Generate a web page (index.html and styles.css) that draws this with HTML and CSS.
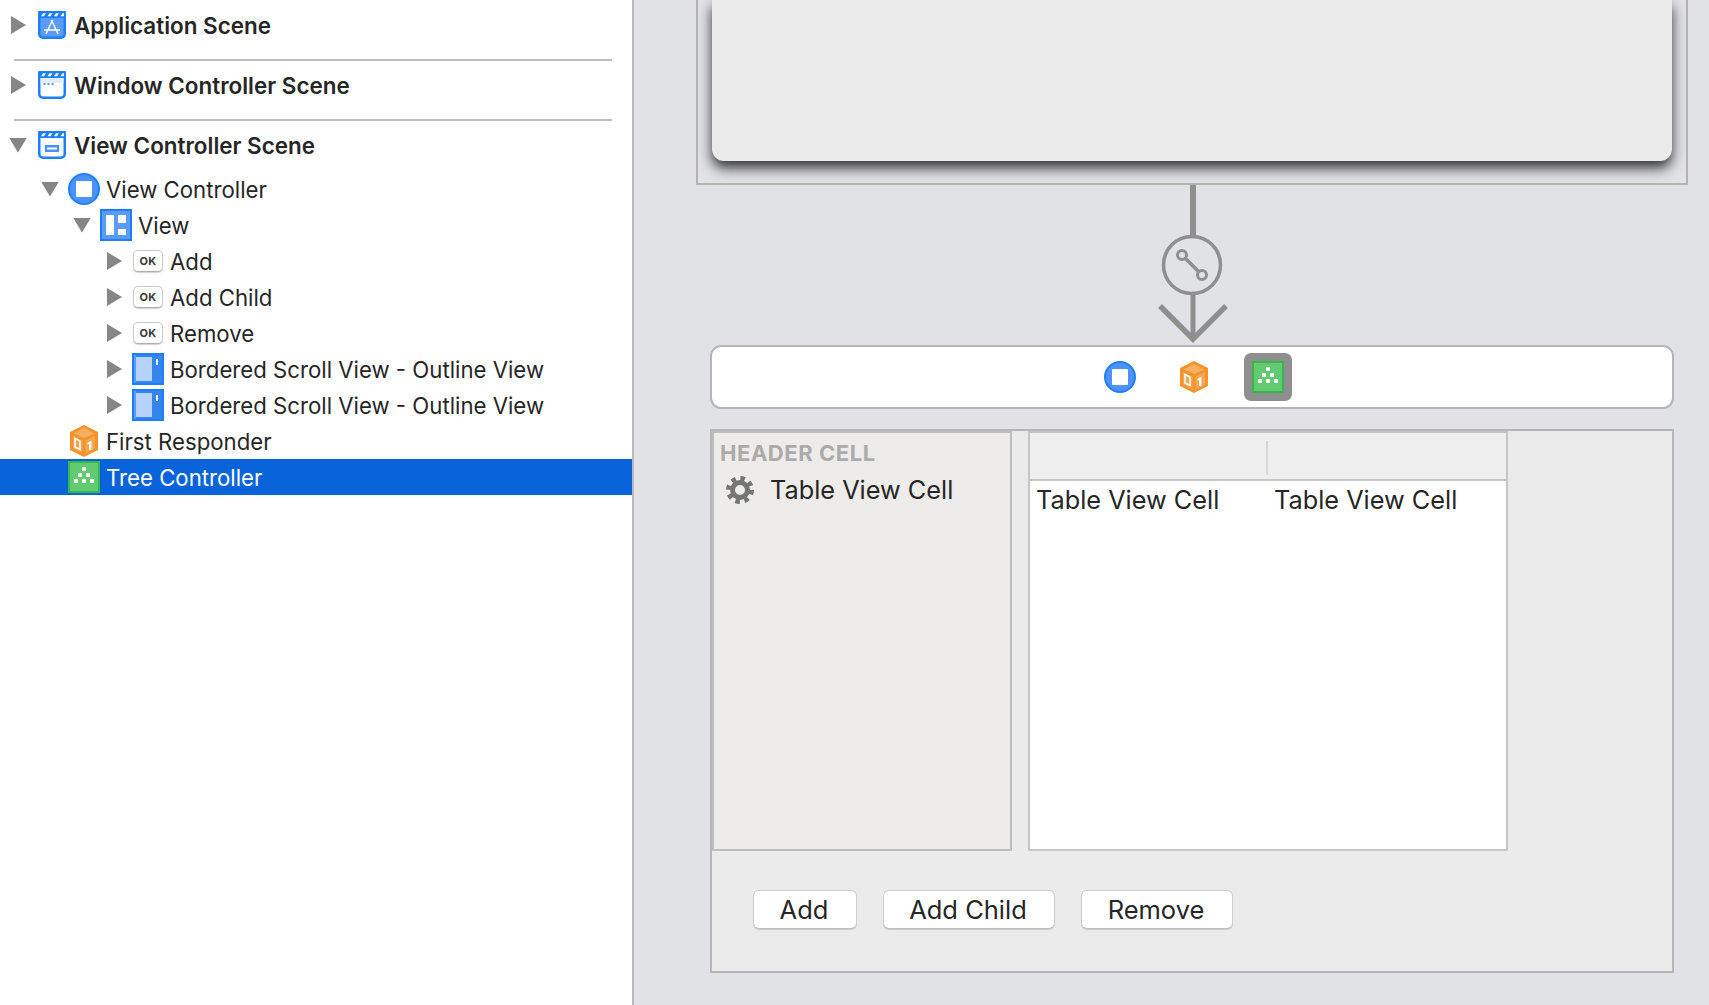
FILE: index.html
```html
<!DOCTYPE html>
<html lang="en">
<head>
<meta charset="utf-8">
<title>Storyboard</title>
<link rel="stylesheet" href="styles.css">
</head>
<body>
<svg class="defs" width="0" height="0" aria-hidden="true">
  <symbol id="clap" viewBox="0 0 28 28">
    <path d="M1 0h26a1 1 0 0 1 1 1v22a5 5 0 0 1-5 5H5a5 5 0 0 1-5-5V1a1 1 0 0 1 1-1z" fill="#1f7ffb"/>
    <path d="M3 5.300l2-3h3l-2 3zM9.500 5.300l2-3h3l-2 3zM16 5.300l2-3h3l-2 3zM22.500 5.300l2-3h1.500v3z" fill="#fff"/>
  </symbol>
  <symbol id="i-app" viewBox="0 0 28 28">
    <use href="#clap"/>
    <path d="M2.500 7h23v15.500a3 3 0 0 1-3 3h-17a3 3 0 0 1-3-3z" fill="#5a9bf8"/>
    <path d="M14.500 9L8 23M13.500 9L20 23M6 19h16" fill="none" stroke="#fff" stroke-width="1.400"/>
  </symbol>
  <symbol id="i-win" viewBox="0 0 28 28">
    <use href="#clap"/>
    <path d="M2.500 7h23v15.500a3 3 0 0 1-3 3h-17a3 3 0 0 1-3-3z" fill="#fff"/>
    <path d="M2.500 7h23v5h-23z" fill="#e3eefd"/>
    <path d="M5.500 12h2v2h-2zM9.500 12h2v2h-2zM13.500 12h2v2h-2z" fill="#5a9bf8"/>
  </symbol>
  <symbol id="i-view" viewBox="0 0 28 28">
    <use href="#clap"/>
    <path d="M2.500 7h23v15.500a3 3 0 0 1-3 3h-17a3 3 0 0 1-3-3z" fill="#fff"/>
    <path d="M7 14h14v7H7z" fill="#4a90f9"/>
    <path d="M9 16.500h10v2H9z" fill="#fff"/>
  </symbol>
  <symbol id="i-vc" viewBox="0 0 32 32">
    <circle cx="16" cy="16" r="15" fill="#4c92fa" stroke="#1f7ffb" stroke-width="2"/>
    <rect x="8" y="8" width="16" height="16" rx="1" fill="#fff"/>
  </symbol>
  <symbol id="i-layout" viewBox="0 0 32 32">
    <rect x="1" y="1" width="30" height="30" fill="#5a9bf8" stroke="#1f7ffb" stroke-width="2"/>
    <path d="M6 6h8v20H6zM18 6h8v8h-8zM18 20h8v6h-8z" fill="#fff"/>
  </symbol>
  <symbol id="i-scroll" viewBox="0 0 32 32">
    <rect x="1" y="1" width="30" height="30" fill="#3485ee" stroke="#1f7ffb" stroke-width="2"/>
    <path d="M2 2h2v28H2z" fill="#5a9bf8"/>
    <path d="M4 4h16v24H4z" fill="#b7d3fb"/>
    <path d="M24 6h2v6h-2z" fill="#fff"/>
  </symbol>
  <symbol id="i-cube" viewBox="0 0 28 32">
    <path d="M14 0l14 7v18l-14 7-14-7V7z" fill="#f5932b"/>
    <path d="M14 3l10.500 5.500L14 13 3.500 8.500z" fill="#f6ae62"/>
    <path d="M15.500 15.500l9.500-4.500v12.500l-9.500 5z" fill="#f7a54f"/>
    <path d="M12.500 15.500L3 11v12.500l9.500 5z" fill="#f7a54f"/>
    <path d="M5 13.500l5 2.500v8.500l-5-2.500z" fill="none" stroke="#fff" stroke-width="1.600"/>
    <path d="M19 17l2.500-1.500V25h-2.500v-6l-1.500.6v-1.700z" fill="#fff"/>
  </symbol>
  <symbol id="i-tree" viewBox="0 0 32 32">
    <rect x="1" y="1" width="30" height="30" fill="#62cb72" stroke="#37b64d" stroke-width="2"/>
    <path d="M14 6h4v4h-4zM10 12h4v4h-4zM18 12h4v4h-4zM6 18h4v4H6zM14 18h4v4h-4zM22 18h4v4h-4z" fill="#fff"/>
  </symbol>
</svg>

<div class="app">
  <aside class="outline">
    <div class="row scene first">
      <span class="tri-r"></span>
      <svg class="ic-scene"><use href="#i-app"/></svg>
      <span class="label strong">Application Scene</span>
    </div>
    <div class="sep"></div>
    <div class="row scene">
      <span class="tri-r"></span>
      <svg class="ic-scene"><use href="#i-win"/></svg>
      <span class="label strong">Window Controller Scene</span>
    </div>
    <div class="sep"></div>
    <div class="row scene last">
      <span class="tri-d"></span>
      <svg class="ic-scene"><use href="#i-view"/></svg>
      <span class="label strong">View Controller Scene</span>
    </div>
    <div class="row l1">
      <span class="tri-d"></span>
      <svg class="ic"><use href="#i-vc"/></svg>
      <span class="label">View Controller</span>
    </div>
    <div class="row l2">
      <span class="tri-d"></span>
      <svg class="ic"><use href="#i-layout"/></svg>
      <span class="label">View</span>
    </div>
    <div class="row l3">
      <span class="tri-r"></span>
      <span class="ok">OK</span>
      <span class="label">Add</span>
    </div>
    <div class="row l3">
      <span class="tri-r"></span>
      <span class="ok">OK</span>
      <span class="label">Add Child</span>
    </div>
    <div class="row l3">
      <span class="tri-r"></span>
      <span class="ok">OK</span>
      <span class="label">Remove</span>
    </div>
    <div class="row l3">
      <span class="tri-r"></span>
      <svg class="ic"><use href="#i-scroll"/></svg>
      <span class="label">Bordered Scroll View - Outline View</span>
    </div>
    <div class="row l3">
      <span class="tri-r"></span>
      <svg class="ic"><use href="#i-scroll"/></svg>
      <span class="label">Bordered Scroll View - Outline View</span>
    </div>
    <div class="row l1">
      <span class="tri-none"></span>
      <svg class="ic-cube"><use href="#i-cube"/></svg>
      <span class="label">First Responder</span>
    </div>
    <div class="row l1 selected">
      <span class="tri-none"></span>
      <svg class="ic"><use href="#i-tree"/></svg>
      <span class="label">Tree Controller</span>
    </div>
  </aside>

  <main class="canvas">
    <div class="column">
      <div class="frame">
        <div class="window"></div>
      </div>

      <svg class="segue" viewBox="0 0 80 160" width="80" height="160">
        <path d="M37 0v52" stroke="#8f8f8f" stroke-width="6" fill="none"/>
        <circle cx="36" cy="80" r="28.500" fill="none" stroke="#8f8f8f" stroke-width="3.500"/>
        <path d="M37 110v44" stroke="#8f8f8f" stroke-width="5" fill="none"/>
        <path d="M4 121l33 33 33-33" stroke="#8f8f8f" stroke-width="5.500" fill="none"/>
        <path d="M29 73l14 14" stroke="#8f8f8f" stroke-width="3.500" fill="none"/>
        <circle cx="26" cy="70" r="4.500" fill="#e1e2e6" stroke="#8f8f8f" stroke-width="3"/>
        <circle cx="46" cy="90" r="4.500" fill="#e1e2e6" stroke="#8f8f8f" stroke-width="3"/>
      </svg>

      <div class="dock">
        <svg class="ic dock-vc"><use href="#i-vc"/></svg>
        <svg class="ic-cube dock-cube"><use href="#i-cube"/></svg>
        <span class="dock-selected"><svg class="ic"><use href="#i-tree"/></svg></span>
      </div>

      <section class="view">
        <div class="panes">
          <div class="source">
            <div class="source-header">HEADER CELL</div>
            <div class="source-row">
              <svg class="gear" viewBox="0 0 28 28" width="28" height="28">
                <circle cx="14" cy="14" r="11.500" fill="none" stroke="#757575" stroke-width="5" stroke-dasharray="4.500 4.530"/>
                <circle cx="14" cy="14" r="7.500" fill="none" stroke="#757575" stroke-width="5"/>
              </svg>
              <span class="cell">Table View Cell</span>
            </div>
          </div>
          <div class="table">
            <div class="table-head">
              <span class="head-divider"></span>
            </div>
            <div class="table-body">
              <span class="cell col-a">Table View Cell</span>
              <span class="cell">Table View Cell</span>
            </div>
          </div>
        </div>
        <div class="buttons">
          <button class="btn btn-add">Add</button>
          <button class="btn btn-child">Add Child</button>
          <button class="btn btn-remove">Remove</button>
        </div>
      </section>
    </div>
  </main>
</div>
</body>
</html>
```

FILE: styles.css
```css
* { box-sizing: border-box; }
html, body { margin: 0; height: 100%; overflow: hidden; }
body { font-family: Inter, "Liberation Sans", sans-serif; color: #262626; background: #fff; }
.defs { position: absolute; }

.app { display: flex; height: 1005px; }

/* outline */
.outline { width: 634px; flex: none; background: #fff; border-right: 2px solid #bababa; }
.row { display: flex; align-items: center; height: 36px; }
.label { font-size: 22.200px; line-height: 36px; padding-top: 1px; white-space: nowrap; }
.label.strong { font-weight: 600; font-size: 22.450px; }

.tri-r, .tri-d, .tri-none { flex: none; display: block; }
.tri-r { width: 15px; height: 18px; background: #868686; clip-path: polygon(0 0, 100% 50%, 0 100%); }
.tri-d { width: 18px; height: 15px; background: #868686; clip-path: polygon(0 0, 100% 0, 50% 100%); }
.tri-none { width: 18px; height: 15px; }

.ic-scene { width: 28px; height: 28px; flex: none; }
.ic { width: 32px; height: 32px; flex: none; display: block; }
.ic-cube { width: 28px; height: 32px; flex: none; display: block; }

.scene { padding-left: 11px; }
.scene .tri-r { margin-right: 12px; }
.scene .tri-d { margin-left: -2px; margin-right: 11px; }
.scene .label { margin-left: 8px; }
.scene.first { margin-top: 7px; }
.scene.last { margin-bottom: 8px; }
.sep { height: 2px; margin: 16px 20px 6px 14px; background: #bdbdbd; }

.l1 { padding-left: 41px; }
.l1 .tri-d, .l1 .tri-none { margin-right: 9px; }
.l1 .label { margin-left: 6px; }
.l1 .ic-cube { margin: 0 2px; }

.l2 { padding-left: 73px; }
.l2 .tri-d { margin-right: 9px; }
.l2 .label { margin-left: 6px; }

.l3 { padding-left: 107px; }
.l3 .tri-r { margin-right: 10px; }
.l3 .label { margin-left: 6px; }
.ok {
  flex: none; width: 30px; height: 22px; margin: 0 1px; display: flex; align-items: center; justify-content: center;
  font-size: 11px; font-weight: 700; letter-spacing: .3px; color: #3a3a3a;
  background: #fff; border: 1px solid #cacaca; border-bottom-color: #aeaeae; border-radius: 5px;
  box-shadow: 0 1px 1px rgba(0,0,0,.18);
}

.selected { background: #0964dc; color: #fff; }

/* canvas */
.canvas { flex: 1; min-width: 0; background: #e1e2e6; padding-left: 62px; overflow: hidden; }
.column { width: 992px; display: flex; flex-direction: column; align-items: center; }

.frame { width: 992px; height: 185px; flex: none; padding: 0 14px; border: 2px solid #b3b3b3; border-top: 0; overflow: hidden; }
.window { height: 161px; background: #ebebeb; border-radius: 0 0 12px 12px; box-shadow: 0 7px 13px rgba(0,0,0,.78); }

.segue { display: block; flex: none; width: 80px; height: 160px; position: relative; left: 4px; }

.dock {
  width: 964px; height: 64px; flex: none; background: #fff; border: 2px solid #b5b5b5; border-radius: 11px;
  display: flex; align-items: center; padding-left: 392px;
}
.dock-vc { margin-right: 44px; }
.dock-cube { margin-right: 36px; }
.dock-selected { width: 48px; height: 48px; border-radius: 7px; background: #8f8f8f; display: flex; align-items: center; justify-content: center; }

.view { width: 964px; height: 544px; flex: none; margin-top: 20px; background: #ebebeb; border: 2px solid #b5b5b5; display: flex; flex-direction: column; }
.panes { display: flex; height: 420px; flex: none; }
.source { width: 300px; flex: none; background: #edecea; border: 2px solid #bdbdbd; padding-left: 6px; }
.source-header { font-size: 22px; font-weight: 700; letter-spacing: .55px; color: #ababab; line-height: 24px; margin-top: 8px; white-space: nowrap; }
.source-row { display: flex; align-items: center; height: 32px; margin-top: 9px; padding-left: 6px; }
.gear { flex: none; display: block; }
.cell { font-size: 25.300px; line-height: 32px; white-space: nowrap; color: #262626; }
.source .cell { margin-left: 16px; }

.table { width: 480px; flex: none; margin-left: 16px; background: #fff; border: 2px solid #c6c6c6; display: flex; flex-direction: column; }
.table-head { height: 48px; flex: none; background: #efefef; border-bottom: 2px solid #c6c6c6; padding: 8px 0 6px 236px; }
.head-divider { display: block; width: 2px; height: 34px; background: #d6d6d6; }
.table-body { display: flex; padding: 3px 0 0 6px; }
.col-a { width: 238px; }

.buttons { display: flex; padding: 39px 0 0 41px; }
.btn {
  height: 39px; padding: 0 2px 0 0; font: 400 25.500px Inter, "Liberation Sans", sans-serif; color: #262626; background: #fff;
  border: 1px solid #cfcfcf; border-bottom-color: #bdbdbd; border-radius: 6px; box-shadow: 0 1px 1px rgba(0,0,0,.14);
}
.btn-add { width: 104px; margin-right: 26px; }
.btn-child { width: 172px; margin-right: 26px; }
.btn-remove { width: 152px; }
```
